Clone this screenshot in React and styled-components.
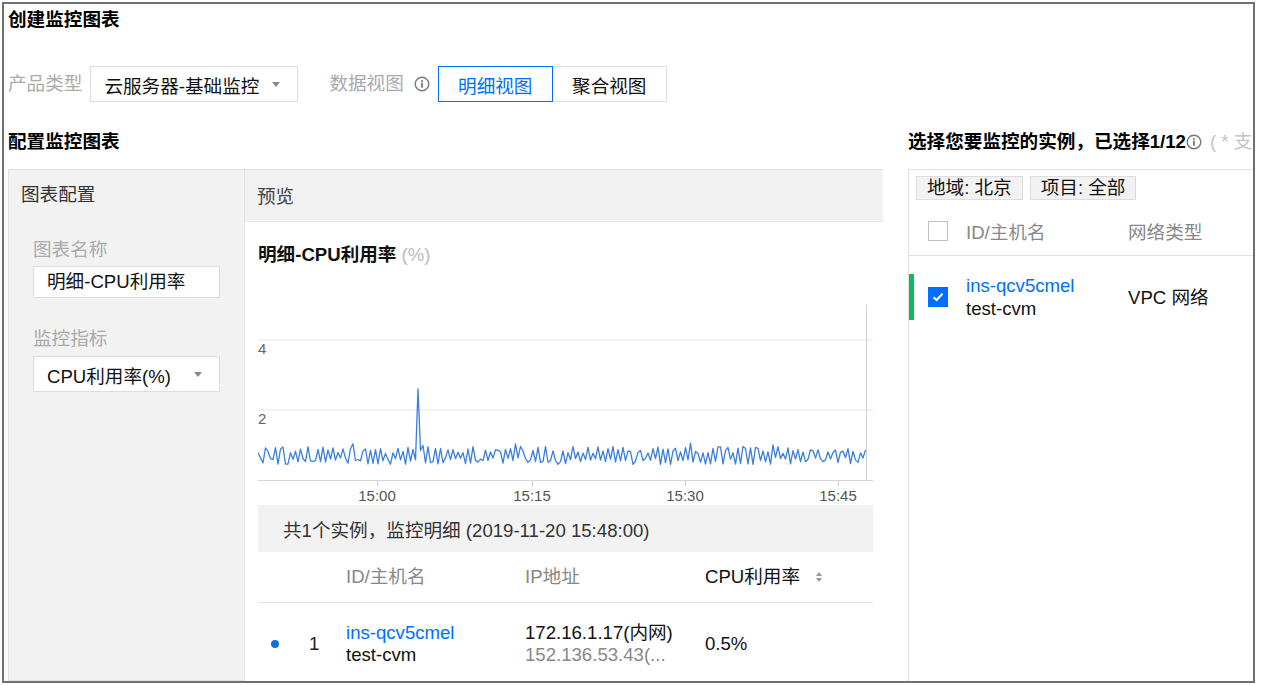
import styled, { createGlobalStyle } from "styled-components";

const GlobalStyle = createGlobalStyle`
	html, body {
		margin: 0;
		padding: 0;
		background: #fff;
	}
	body {
		font-family: "Liberation Sans", "Noto Sans CJK SC", sans-serif;
		font-size: 18.6px;
		color: #222;
	}
	* {
		box-sizing: border-box;
	}
`;

const BLUE = "#006eff";

const Frame = styled.div`
	margin: 2px 0 0 2px;
	width: 1253px;
	height: 681px;
	border: 2px solid #707070;
	padding: 4px 0 0 4px;
	overflow: hidden;
	display: flex;
	flex-direction: column;
`;

const PageTitle = styled.div`
	font-weight: bold;
	line-height: 24px;
	color: #000;
`;

const FilterRow = styled.div`
	margin-top: 34px;
	height: 36px;
	display: flex;
	align-items: center;
`;

const FieldLabel = styled.span`
	color: #aaa;
	line-height: 36px;
	margin-right: ${(p) => p.gap || 8}px;
	margin-left: ${(p) => p.ml || 0}px;
	white-space: nowrap;
`;

const SelectBox = styled.div`
	width: ${(p) => p.w}px;
	height: 36px;
	border: 1px solid #ddd;
	background: #fff;
	display: flex;
	align-items: center;
	justify-content: space-between;
	padding: 0 13px 0 13px;
	color: #111;
	white-space: nowrap;
`;

const Caret = styled.span`
	width: 0;
	height: 0;
	border-left: 4px solid transparent;
	border-right: 4px solid transparent;
	border-top: 5px solid #888;
	margin-right: 4px;
`;

const InfoWrap = styled.span`
	display: inline-flex;
	width: 16px;
	height: 16px;
	margin-right: ${(p) => p.mr || 0}px;
	margin-left: ${(p) => p.ml || 0}px;
`;

const SegGroup = styled.div`
	display: flex;
	height: 36px;
`;

const SegButton = styled.div`
	width: ${(p) => p.w}px;
	height: 36px;
	display: flex;
	align-items: center;
	justify-content: center;
	border: 1px solid ${(p) => (p.active ? BLUE : "#ddd")};
	color: ${(p) => (p.active ? BLUE : "#111")};
	margin-left: ${(p) => (p.active ? 0 : -1)}px;
	position: relative;
	z-index: ${(p) => (p.active ? 1 : 0)};
	background: #fff;
`;

const Main = styled.div`
	display: flex;
	flex: 1;
	min-height: 0;
`;

const Section = styled.div`
	display: flex;
	flex-direction: column;
	flex-shrink: 0;
	width: ${(p) => p.w}px;
	margin-left: ${(p) => p.ml || 0}px;
`;

const SectionTitle = styled.div`
	margin-top: 28px;
	margin-bottom: 15px;
	line-height: 24px;
	font-weight: bold;
	color: #000;
	white-space: nowrap;
	display: flex;
	align-items: center;
`;

const Hint = styled.span`
	font-weight: normal;
	color: #c4c4c4;
	margin-left: 8px;
`;

const Panels = styled.div`
	display: flex;
	flex: 1;
`;

const ConfigPanel = styled.div`
	width: 237px;
	background: #f2f2f2;
	border: 1px solid #e2e2e2;
	padding: 13px 0 0 12px;
`;

const PanelHead = styled.div`
	line-height: 24px;
	color: #333;
`;

const ConfigBody = styled.div`
	padding-left: 12px;
`;

const ConfigLabel = styled.div`
	line-height: 24px;
	color: #aaa;
	margin-top: ${(p) => p.mt}px;
	margin-bottom: ${(p) => p.mb}px;
`;

const TextInput = styled.div`
	width: 187px;
	height: 32px;
	border: 1px solid #ddd;
	background: #fff;
	padding-left: 13px;
	line-height: 30px;
	color: #111;
	white-space: nowrap;
`;

const Preview = styled.div`
	flex: 1;
	display: flex;
	flex-direction: column;
`;

const PreviewHead = styled.div`
	height: 53px;
	background: #f2f2f2;
	border-top: 1px solid #e2e2e2;
	border-bottom: 1px solid #e6e6e6;
	padding: 0 0 2px 12px;
	display: flex;
	align-items: center;
	color: #444;
`;

const PreviewBody = styled.div`
	padding: 0 10px 0 13px;
`;

const ChartTitle = styled.div`
	margin-top: 21px;
	line-height: 24px;
	font-weight: bold;
	color: #111;
	span {
		font-weight: normal;
		color: #bbb;
	}
`;

const ChartSvg = styled.svg`
	display: block;
	margin-top: 28px;
	font-family: "Liberation Sans", sans-serif;
`;

const Summary = styled.div`
	height: 47px;
	background: #f2f2f2;
	padding-left: 25px;
	display: flex;
	align-items: center;
	color: #333;
	white-space: nowrap;
`;

const TableRow = styled.div`
	display: grid;
	grid-template-columns: 88px 179px 180px 1fr;
	align-items: ${(p) => (p.head ? "center" : "start")};
	height: ${(p) => (p.head ? "51px" : "auto")};
	border-bottom: ${(p) => (p.head ? "1px solid #e2e2e2" : "none")};
	padding-top: ${(p) => (p.head ? 0 : 19)}px;
	line-height: 22px;
	white-space: nowrap;
`;

const HeadCell = styled.div`
	color: ${(p) => (p.strong ? "#111" : "#888")};
	display: flex;
	align-items: center;
`;

const Cell = styled.div`
	display: flex;
	flex-direction: column;
	justify-content: center;
	min-height: 44px;
	color: #111;
`;

const IndexCell = styled.div`
	display: flex;
	align-items: center;
	height: 44px;
	padding-left: 13px;
`;

const Dot = styled.span`
	width: 8px;
	height: 8px;
	border-radius: 50%;
	background: #1a6fd6;
	margin-right: 30px;
`;

const Link = styled.span`
	color: ${BLUE};
`;

const Muted = styled.span`
	color: #888;
`;

const SortIcon = styled.span`
	display: inline-flex;
	flex-direction: column;
	gap: 2px;
	margin-left: 16px;
	&::before,
	&::after {
		content: "";
		width: 0;
		height: 0;
		border-left: 3px solid transparent;
		border-right: 3px solid transparent;
	}
	&::before {
		border-bottom: 4px solid #999;
	}
	&::after {
		border-top: 4px solid #999;
	}
`;

const PickPanel = styled.div`
	flex: 1;
	border-top: 1px solid #e2e2e2;
	border-left: 1px solid #e2e2e2;
`;

const TagRow = styled.div`
	display: flex;
	gap: 7px;
	padding: 6px 0 0 7px;
`;

const Tag = styled.div`
	height: 24px;
	line-height: 22px;
	padding: 0 10px;
	background: #f2f2f2;
	border: 1px solid #ddd;
	color: #111;
	white-space: nowrap;
`;

const PickRow = styled.div`
	display: flex;
	align-items: center;
	height: 56px;
	padding: 6px 0 0 19px;
	border-bottom: 1px solid #e2e2e2;
	white-space: nowrap;
`;

const SelectedItem = styled.div`
	margin-top: 18px;
	height: 46px;
	display: flex;
	align-items: center;
	border-left: 5px solid #0abf5b;
	padding-left: 14px;
	line-height: 23px;
	white-space: nowrap;
`;

const Check = styled.span`
	width: 20px;
	height: 20px;
	flex-shrink: 0;
	border: 1px solid ${(p) => (p.checked ? BLUE : "#c0c0c0")};
	background: ${(p) => (p.checked ? BLUE : "#fff")};
	display: inline-flex;
	align-items: center;
	justify-content: center;
	margin-right: 18px;
`;

const PickCol = styled.div`
	width: ${(p) => p.w}px;
	color: ${(p) => (p.muted ? "#888" : "#111")};
	display: flex;
	flex-direction: column;
`;

const InfoIcon = ({ mr, ml }) => (
	<InfoWrap mr={mr} ml={ml}>
		<svg width="16" height="16" viewBox="0 0 16 16">
			<circle cx="8" cy="8" r="6.8" fill="none" stroke="#777" strokeWidth="1.4" />
			<circle cx="8" cy="4.9" r="1" fill="#777" />
			<rect x="7.1" y="6.7" width="1.8" height="5" fill="#777" />
		</svg>
	</InfoWrap>
);

const makeSeries = () => {
	let seed = 12345;
	const rnd = () => {
		seed = (seed * 16807) % 2147483647;
		return seed / 2147483647;
	};
	const pts = [];
	let sign = 1;
	for (let x = 0; x <= 608; x += 2.5) {
		let v = 0.7 + sign * (0.06 + rnd() * 0.2);
		if (rnd() > 0.88 && sign > 0) v += 0.12;
		if (x === 160) v = 2.6;
		pts.push(`${x},${(185 - v * 35).toFixed(1)}`);
		sign = rnd() > 0.2 ? -sign : sign;
	}
	return pts.join(" ");
};

const series = makeSeries();
const ticks = [
	{ x: 119, label: "15:00" },
	{ x: 274, label: "15:15" },
	{ x: 427, label: "15:30" },
	{ x: 580, label: "15:45" },
];

const Chart = () => (
	<ChartSvg width="615" height="210" viewBox="0 0 615 210">
		<line x1="0" y1="45" x2="615" y2="45" stroke="#e6e6e6" />
		<line x1="0" y1="115" x2="615" y2="115" stroke="#e6e6e6" />
		<line x1="608.5" y1="10" x2="608.5" y2="185" stroke="#cfcfcf" />
		<line x1="0" y1="185.5" x2="615" y2="185.5" stroke="#d6d6d6" />
		<text x="0" y="59" fontSize="15" fill="#666">4</text>
		<text x="0" y="129" fontSize="15" fill="#666">2</text>
		{ticks.map((t) => (
			<g key={t.label}>
				<line x1={t.x + 0.5} y1="186" x2={t.x + 0.5} y2="191" stroke="#ccc" />
				<text x={t.x} y="206" fontSize="15" fill="#555" textAnchor="middle">
					{t.label}
				</text>
			</g>
		))}
		<polyline points={series} fill="none" stroke="#3b7fdc" strokeWidth="1.3" strokeLinejoin="round" />
	</ChartSvg>
);

const CheckMark = () => (
	<svg width="12" height="10" viewBox="0 0 12 10">
		<path d="M1.5 5.2 L4.6 8 L10.5 1.8" fill="none" stroke="#fff" strokeWidth="2" />
	</svg>
);

const App = () => {
	return (
		<>
			<GlobalStyle />
			<Frame>
				<PageTitle>创建监控图表</PageTitle>
				<FilterRow>
					<FieldLabel gap={8}>产品类型</FieldLabel>
					<SelectBox w={208}>
						云服务器-基础监控
						<Caret />
					</SelectBox>
					<FieldLabel gap={10} ml={31}>数据视图</FieldLabel>
					<InfoIcon mr={8} />
					<SegGroup>
						<SegButton active w={115}>明细视图</SegButton>
						<SegButton w={115}>聚合视图</SegButton>
					</SegGroup>
				</FilterRow>
				<Main>
					<Section w={875}>
						<SectionTitle>配置监控图表</SectionTitle>
						<Panels>
							<ConfigPanel>
								<PanelHead>图表配置</PanelHead>
								<ConfigBody>
									<ConfigLabel mt={31} mb={4}>图表名称</ConfigLabel>
									<TextInput>明细-CPU利用率</TextInput>
									<ConfigLabel mt={29} mb={5}>监控指标</ConfigLabel>
									<SelectBox w={187}>
										CPU利用率(%)
										<Caret />
									</SelectBox>
								</ConfigBody>
							</ConfigPanel>
							<Preview>
								<PreviewHead>预览</PreviewHead>
								<PreviewBody>
									<ChartTitle>
										明细-CPU利用率 <span>(%)</span>
									</ChartTitle>
									<Chart />
									<Summary>共1个实例，监控明细 (2019-11-20 15:48:00)</Summary>
									<TableRow head>
										<HeadCell />
										<HeadCell>ID/主机名</HeadCell>
										<HeadCell>IP地址</HeadCell>
										<HeadCell strong>
											CPU利用率
											<SortIcon />
										</HeadCell>
									</TableRow>
									<TableRow>
										<IndexCell>
											<Dot />1
										</IndexCell>
										<Cell>
											<Link>ins-qcv5cmel</Link>
											<span>test-cvm</span>
										</Cell>
										<Cell>
											<span>172.16.1.17(内网)</span>
											<Muted>152.136.53.43(...</Muted>
										</Cell>
										<Cell>0.5%</Cell>
									</TableRow>
								</PreviewBody>
							</Preview>
						</Panels>
					</Section>
					<Section w={420} ml={25}>
						<SectionTitle>
							选择您要监控的实例，已选择1/12
							<InfoIcon />
							<Hint>( * 支持按住Shift键多选)</Hint>
						</SectionTitle>
						<PickPanel>
							<TagRow>
								<Tag>地域: 北京</Tag>
								<Tag>项目: 全部</Tag>
							</TagRow>
							<PickRow>
								<Check />
								<PickCol w={162} muted>ID/主机名</PickCol>
								<PickCol w={150} muted>网络类型</PickCol>
							</PickRow>
							<SelectedItem>
								<Check checked>
									<CheckMark />
								</Check>
								<PickCol w={162}>
									<Link>ins-qcv5cmel</Link>
									<span>test-cvm</span>
								</PickCol>
								<PickCol w={150}>VPC 网络</PickCol>
							</SelectedItem>
						</PickPanel>
					</Section>
				</Main>
			</Frame>
		</>
	);
};

export default App;
